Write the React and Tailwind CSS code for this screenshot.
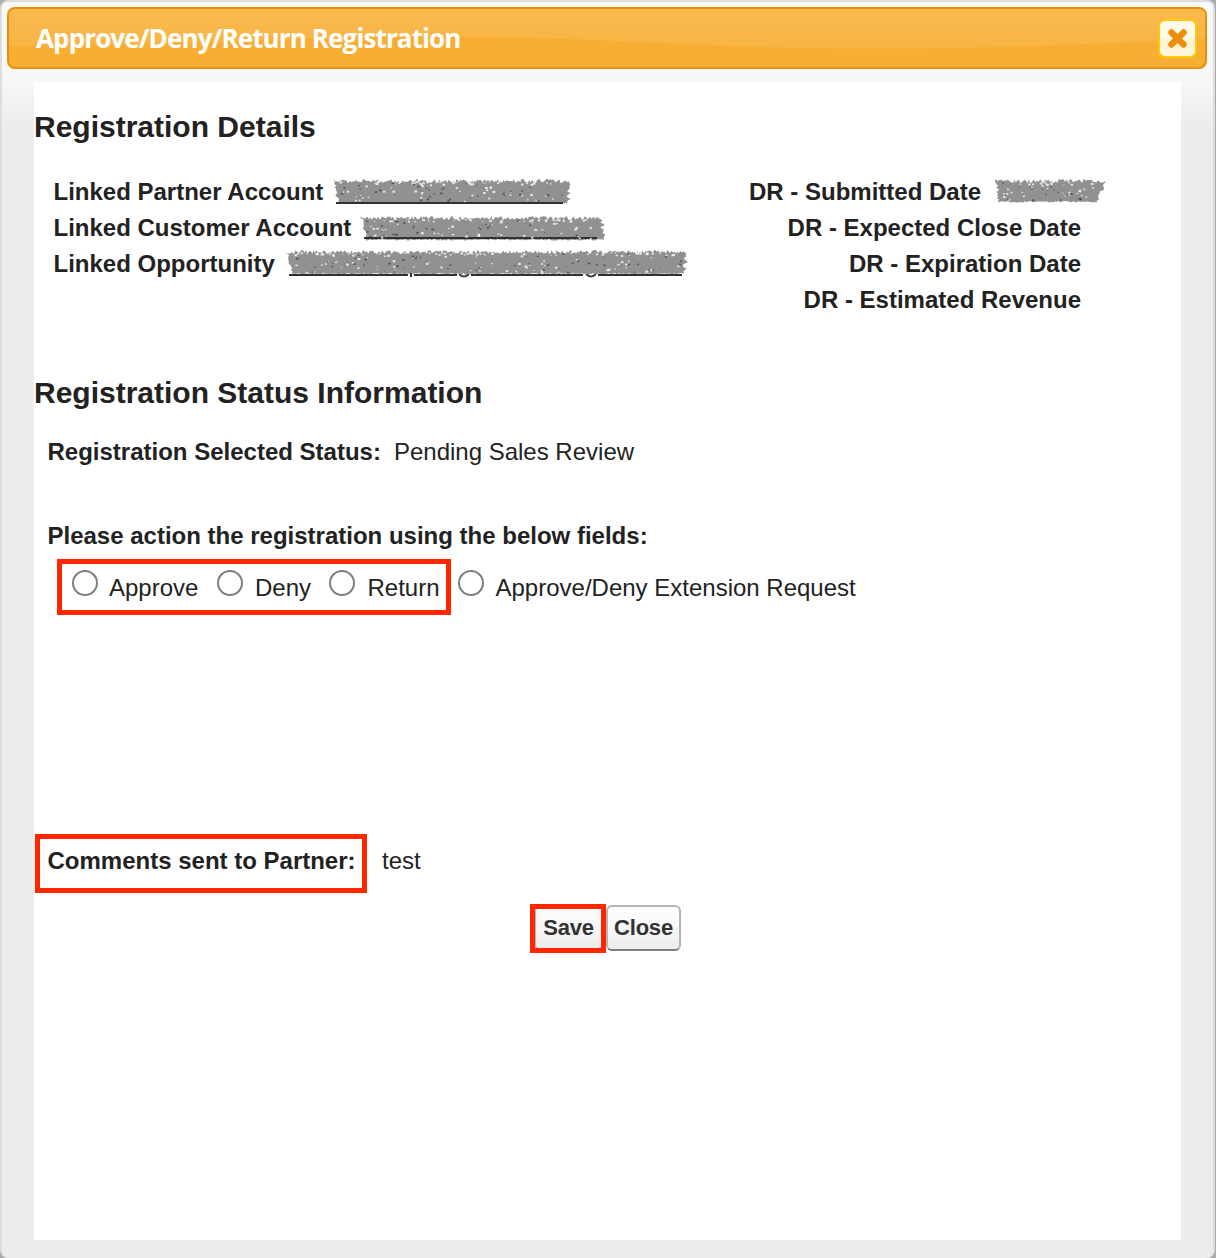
import React from "react";

// Small deterministic generator so the brush texture is stable between renders.
function rng(seed) {
  let s = seed;
  return () => {
    s = (s * 16807) % 2147483647;
    return s / 2147483647;
  };
}

// Rough marker stroke that hides a value.
function Scribble({ w, h = 25, seed, slant = 4, lean = 0, underline = [], hooks = [], notch = 0, ink = 30 }) {
  const r = rng(seed);
  const pts = [];
  for (let x = 0; x <= w - 3 - lean; x += 1.3) pts.push([x, r() * 4]);
  for (let y = 2; y < h - 2; y += 1.5)
    pts.push([w - r() * 5 - (notch && y > h * 0.5 ? notch : 0) - lean * (1 - y / h), y]);
  for (let x = w - 4 - notch; x > slant; x -= 1.5) pts.push([x, h - 2 + r() * 1.6]);
  for (let y = h - 2; y > 2; y -= 1.5) pts.push([(y / h) * slant + r() * 3, y]);
  const d = "M" + pts.map((p) => p[0].toFixed(1) + " " + p[1].toFixed(1)).join("L") + "Z";
  const span = w - 14 - notch - lean;
  const light = Array.from({ length: Math.round(w / 3) }, () => [6 + r() * span, r() < 0.5 ? 2 + r() * 3 : 5 + r() * (h - 8), 0.8 + r() * 1.4]);
  const dark = Array.from({ length: Math.round((w * ink) / 200) }, () => [6 + r() * span, 3 + r() * (h - 6), 0.7 + r() * 1.2]);
  return (
    <svg width={w} height={h + 3} className="block overflow-visible">
      <path d={d} fill="#919191" />
      {underline.map(([a, b, y], i) => (
        <path key={i} d={`M${a} ${y}H${b}`} stroke="#332f33" strokeWidth="2" />
      ))}
      {hooks.map(([x, y], i) => (
        <path key={i} d={`M${x - 5} ${y}q5 5 10 0`} fill="none" stroke="#444" strokeWidth="2" />
      ))}
      {light.map(([x, y, k], i) => (
        <rect key={i} x={x} y={y} width={k * 1.3} height={k} fill="#fff" opacity="0.75" />
      ))}
      {dark.map(([x, y, k], i) => (
        <rect key={i} x={x} y={y} width={k * 1.4} height={k} fill="#444" opacity="0.75" />
      ))}
    </svg>
  );
}

function Radio({ label, className = "", gap = "mr-[11px]" }) {
  return (
    <label className={"flex h-9 items-center whitespace-nowrap " + className}>
      <span className={"-mt-[10px] size-[26px] shrink-0 rounded-full border-2 border-[#7f7f7f] bg-white " + gap} />
      {label}
    </label>
  );
}

function Row({ label, children }) {
  return (
    <div className="flex h-9 items-center">
      <span className="whitespace-nowrap">{label}</span>
      {children}
    </div>
  );
}

export default function App() {
  return (
    <div className="h-[1258px] w-[1216px] overflow-hidden bg-[#aaaaaa] font-['Liberation_Sans',Arial,sans-serif] text-2xl leading-9 text-[#222222]">
      <div className="flex h-[1258px] w-[1215px] flex-col rounded-[8px] border-2 border-b-0 border-[#dddddd] bg-[linear-gradient(#fafafa_0px,#f7f7f7_78px,#ededed_122px)] px-[5px] pt-[5px]">
        <header className="relative flex h-[62px] w-[1200px] items-center justify-between overflow-hidden rounded-[8px] border-2 border-[#e78f08] bg-[#f8ae33] pl-[27px] pr-[8px]">
          <svg className="absolute inset-0" width="1196" height="58" viewBox="0 0 1196 58">
            <defs>
              <linearGradient id="shine" x1="0" y1="0" x2="0" y2="1">
                <stop offset="0" stopColor="#f9b94f" />
                <stop offset="1" stopColor="#f8b544" />
              </linearGradient>
            </defs>
            <path d="M0 0H1196V30C1080 35 980 39.5 850 39.5C700 39 600 28 450 28C280 28 160 36 0 37Z" fill="url(#shine)" />
          </svg>
          <h1 className="relative -mt-px whitespace-nowrap font-['Trebuchet_MS','Open_Sans',sans-serif] text-[26px] font-bold tracking-[-0.88px] text-white">
            Approve/Deny/Return Registration
          </h1>
          <button aria-label="Close dialog" className="relative flex size-[39px] items-center justify-center rounded-[7px] border-2 border-[#fbcb09] bg-[linear-gradient(#fffaea_0_50%,#fdf3d0_54%,#fff8e0)]">
            <svg width="21" height="21" viewBox="0 0 20 20" className="mt-px">
              <path d="M4.2 4.2L15.8 15.8M15.8 4.2L4.2 15.8" stroke="#ef8c08" strokeWidth="6" strokeLinecap="round" />
            </svg>
          </button>
        </header>

        <main className="ml-[27px] mt-[13px] h-[1158px] w-[1147px] bg-white pt-[27px]">
          <h2 className="h-9 whitespace-nowrap text-[30px] font-bold">Registration Details</h2>
          <section className="mt-[29px] flex h-[144px] font-bold">
            <div className="w-[680px] pl-[19.5px]">
              <Row label="Linked Partner Account">
                <div className="ml-[10px] mt-0.5">
                  <Scribble w={238} seed={71} underline={[[3, 230, 24]]} />
                </div>
              </Row>
              <Row label="Linked Customer Account">
                <div className="ml-[9px] mt-[3px]">
                  <Scribble w={248} seed={919} slant={5} lean={5} underline={[[4, 237, 22]]} />
                </div>
              </Row>
              <Row label="Linked Opportunity">
                <div className="relative ml-[10px] -mt-px">
                  <Scribble
                    w={403}
                    seed={377}
                    slant={7}
                    underline={[[4, 123, 25], [129, 172, 25], [186, 298, 25], [313, 397, 25]]}
                    hooks={[[179, 24], [306, 24]]}
                  />
                  <div className="absolute left-[125px] top-[23px] h-[4px] w-[2px] bg-[#333333]" />
                </div>
              </Row>
            </div>
            <div className="flex w-[400px] flex-col">
              <div className="ml-[35px]">
                <Row label="DR - Submitted Date">
                  <div className="-mt-[3px] ml-[14px] h-6">
                    <Scribble w={113} h={24} seed={55} notch={7} slant={2} />
                  </div>
                </Row>
              </div>
              <div className="mr-[33px] flex flex-col items-end">
                <Row label="DR - Expected Close Date" />
                <Row label="DR - Expiration Date" />
                <Row label="DR - Estimated Revenue" />
              </div>
            </div>
          </section>

          <h2 className="mt-[57px] h-9 whitespace-nowrap text-[30px] font-bold">Registration Status Information</h2>
          <p className="mt-[23px] h-9 whitespace-nowrap pl-[13.5px]">
            <b>Registration Selected Status:</b>
            <span className="ml-[13px]">Pending Sales Review</span>
          </p>
          <p className="mt-12 h-9 whitespace-nowrap pl-[13.5px] font-bold">Please action the registration using the below fields:</p>
          <div className="relative mt-4 flex h-9 pl-[38px]">
            <Radio label="Approve" className="w-[145px]" />
            <Radio label="Deny" className="w-[112px]" gap="mr-[12px]" />
            <Radio label="Return" className="w-[129px]" gap="mr-[12.5px]" />
            <Radio label="Approve/Deny Extension Request" gap="mr-[11.5px]" />
            <div className="absolute -top-[11px] left-[23px] h-[56px] w-[394px] border-5 border-[#ff2600]" />
          </div>

          <div className="relative mt-[237px] flex h-9 whitespace-nowrap pl-[13.5px]">
            <b>Comments sent to Partner:</b>
            <span className="ml-[26.5px]">test</span>
            <div className="absolute -top-[9px] left-px h-[59px] w-[332px] border-5 border-[#ff2600]" />
          </div>

          <div className="mt-[26px] flex pl-[500px] text-[22px] font-bold tracking-[-0.2px] text-[#333333]">
            <div className="relative">
              <button className="flex h-[46px] w-[69px] items-center justify-center rounded-[6px] border-2 border-[#b5b5b5] bg-gradient-to-b from-white to-[#eeeeee]">Save</button>
              <div className="absolute -left-1 -top-px h-[49px] w-[76px] border-5 border-[#ff2600]" />
            </div>
            <button className="ml-[3px] flex h-[46px] w-[75px] items-center justify-center rounded-[6px] border-2 border-[#b5b5b5] border-b-[#7f7f7f] bg-gradient-to-b from-white to-[#eeeeee]">Close</button>
          </div>
        </main>
      </div>
    </div>
  );
}
